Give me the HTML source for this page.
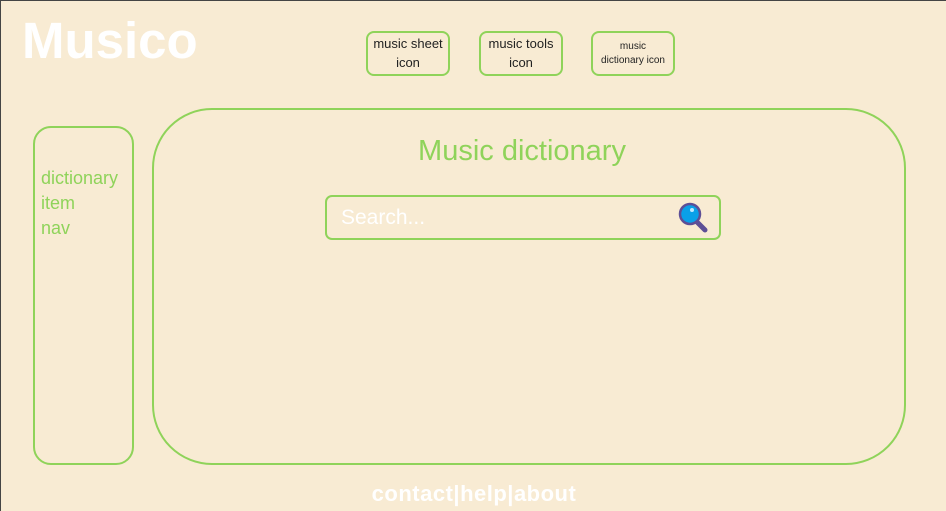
<!DOCTYPE html>
<html><head><meta charset="utf-8"><style>
*{margin:0;padding:0;box-sizing:border-box}
html,body{width:946px;height:511px;overflow:hidden}
body{background:#f8ebd3;font-family:"Liberation Sans",sans-serif;position:relative;border-top:1px solid #444;border-left:1px solid #444}
.a{position:absolute}
.logo{left:21px;top:10px;font-size:51px;font-weight:bold;color:#fff;letter-spacing:0px}
.btn{border:2px solid #8fd35a;border-radius:8px;text-align:center;color:#222;display:flex;align-items:center;justify-content:center;line-height:1.4}
.g{border:2px solid #8fd35a}
</style></head><body>
<div class="a logo">Musico</div>
<div class="a btn" style="left:365px;top:30px;width:84px;height:45px;font-size:13px">music sheet<br>icon</div>
<div class="a btn" style="left:478px;top:30px;width:84px;height:45px;font-size:13px">music tools<br>icon</div>
<div class="a btn" style="left:590px;top:30px;width:84px;height:45px;font-size:10px">music<br>dictionary icon</div>
<div class="a g" style="left:32px;top:125px;width:101px;height:339px;border-radius:18px"></div>
<div class="a" style="left:40px;top:165px;color:#8fd35a;font-size:18px;line-height:25px">dictionary<br>item<br>nav</div>
<div class="a g" style="left:151px;top:107px;width:754px;height:357px;border-radius:60px"></div>
<div class="a" style="left:151px;top:134px;width:740px;text-align:center;color:#8fd35a;font-size:29px">Music dictionary</div>
<div class="a g" style="left:324px;top:194px;width:396px;height:45px;border-radius:7px"></div>
<div class="a" style="left:340px;top:205px;color:#fff;font-size:21px">Search...</div>
<svg class="a" style="left:677px;top:201px" width="34" height="34" viewBox="0 0 34 34">
<line x1="17" y1="18" x2="27" y2="28" stroke="#5d4f96" stroke-width="5" stroke-linecap="round"/>
<circle cx="12" cy="12" r="10" fill="#0aa0e8" stroke="#5d4f96" stroke-width="2.5"/>
<circle cx="14" cy="8" r="2" fill="#bfe9ff"/>
</svg>
<div class="a" style="left:0;top:480px;width:946px;text-align:center;color:#fff;font-size:22px;font-weight:bold;letter-spacing:0.5px">contact|help|about</div>
</body></html>
